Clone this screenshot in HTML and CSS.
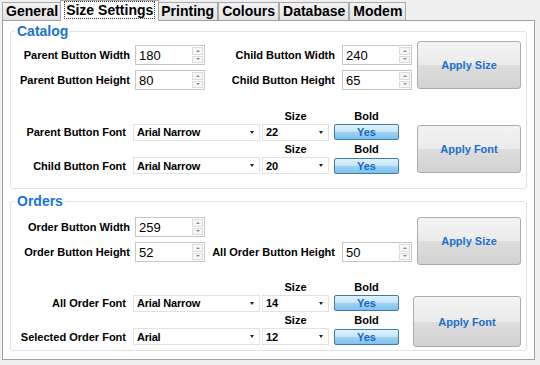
FILE: index.html
```html
<!DOCTYPE html>
<html lang="en">

<head>
    <meta charset="UTF-8">
    <meta name="viewport" content="width=device-width, initial-scale=1.0">
    <title>Size Settings</title>
    <link rel="stylesheet" href="styles.css">
</head>

<body>
    <div class="window">
        <!-- tab headers -->
        <div class="tabs">
            <div class="tab">General</div>
            <div class="tab active"><span class="focus">Size Settings</span></div>
            <div class="tab">Printing</div>
            <div class="tab">Colours</div>
            <div class="tab">Database</div>
            <div class="tab">Modem</div>
        </div>

        <div class="panel">
            <!-- Catalog -->
            <fieldset class="group">
                <legend>Catalog</legend>
                <div class="size-grid">
                    <label class="lbl">Parent Button Width</label>
                    <div class="spin"><span class="val">180</span><span class="arrows"><i class="up"></i><i class="down"></i></span></div>
                    <label class="lbl second">Child Button Width</label>
                    <div class="spin"><span class="val">240</span><span class="arrows"><i class="up"></i><i class="down"></i></span></div>
                    <button class="apply">Apply Size</button>
                    <label class="lbl">Parent Button Height</label>
                    <div class="spin"><span class="val">80</span><span class="arrows"><i class="up"></i><i class="down"></i></span></div>
                    <label class="lbl second">Child Button Height</label>
                    <div class="spin"><span class="val">65</span><span class="arrows"><i class="up"></i><i class="down"></i></span></div>
                </div>

                <div class="font-grid">
                    <span class="blank"></span>
                    <span class="head size">Size</span>
                    <span class="head bold">Bold</span>
                    <button class="apply">Apply Font</button>
                    <label class="lbl">Parent Button Font</label>
                    <div class="combo name">Arial Narrow</div>
                    <div class="combo size">22</div>
                    <button class="yes">Yes</button>
                    <span class="blank"></span>
                    <span class="head size">Size</span>
                    <span class="head bold">Bold</span>
                    <label class="lbl">Child Button Font</label>
                    <div class="combo name">Arial Narrow</div>
                    <div class="combo size">20</div>
                    <button class="yes">Yes</button>
                </div>
            </fieldset>

            <!-- Orders -->
            <fieldset class="group orders">
                <legend>Orders</legend>
                <div class="size-grid">
                    <label class="lbl">Order Button Width</label>
                    <div class="spin"><span class="val">259</span><span class="arrows"><i class="up"></i><i class="down"></i></span></div>
                    <span class="blank"></span>
                    <button class="apply">Apply Size</button>
                    <label class="lbl">Order Button Height</label>
                    <div class="spin"><span class="val">52</span><span class="arrows"><i class="up"></i><i class="down"></i></span></div>
                    <label class="lbl second">All Order Button Height</label>
                    <div class="spin"><span class="val">50</span><span class="arrows"><i class="up"></i><i class="down"></i></span></div>
                </div>

                <div class="font-grid">
                    <span class="blank"></span>
                    <span class="head size">Size</span>
                    <span class="head bold">Bold</span>
                    <button class="apply wide">Apply Font</button>
                    <label class="lbl">All Order Font</label>
                    <div class="combo name">Arial Narrow</div>
                    <div class="combo size">14</div>
                    <button class="yes">Yes</button>
                    <span class="blank"></span>
                    <span class="head size">Size</span>
                    <span class="head bold">Bold</span>
                    <label class="lbl">Selected Order Font</label>
                    <div class="combo name">Arial</div>
                    <div class="combo size">12</div>
                    <button class="yes">Yes</button>
                </div>
            </fieldset>
        </div>
    </div>
</body>

</html>
```

FILE: styles.css
```css
* {
    box-sizing: border-box;
}

body {
    margin: 0;
    background: #f0f0f0;
    font-family: "Liberation Sans", Arial, sans-serif;
    color: #000;
}

button {
    font-family: inherit;
    padding: 0;
    cursor: pointer;
}

.window {
    width: 540px;
    height: 365px;
}

/* tab strip */
.tabs {
    display: flex;
    align-items: flex-end;
    height: 20px;
    padding-left: 2px;
}

.tab {
    height: 18px;
    line-height: 17px;
    padding: 0 3px;
    border: 1px solid #a9a9a9;
    border-bottom: 0;
    background: linear-gradient(#f3f3f3, #e3e3e3);
    font-size: 14px;
    font-weight: bold;
    white-space: nowrap;
}

.tab.active {
    position: relative;
    z-index: 1;
    height: 21px;
    margin: 0 -2px -1px;
    padding: 1px 4px 0;
    line-height: 17px;
    background: #fff;
}

.tab.active .focus {
    display: inline-block;
    padding: 0 1px;
    line-height: 16px;
    outline: 1px dotted #333;
}

.panel {
    margin-left: 2px;
    width: 533px;
    height: 340px;
    padding-top: 1px;
    border: 1px solid #a0a0a0;
    background: #fff;
}

/* group boxes */
.group {
    margin: 1px 7px 0;
    padding: 2px 0 14px;
    min-width: 0;
    border: 1px solid #dde3e8;
    border-radius: 3px;
}

.group legend {
    margin-left: 4px;
    padding: 0 2px;
    font-size: 14px;
    line-height: 16px;
    font-weight: bold;
    color: #1a73d2;
}

.group.orders {
    margin-top: 4px;
    padding-top: 8px;
    padding-bottom: 5px;
}

.lbl {
    font-size: 11px;
    font-weight: bold;
    line-height: 20px;
    text-align: right;
    white-space: nowrap;
}

.blank {
    grid-column: span 2;
}

/* size rows */
.size-grid {
    display: grid;
    grid-template-columns: 124px 70px 137px 70px 109px;
    grid-template-rows: 24px 25px;
}

.orders .size-grid {
    grid-template-rows: 20px 25px;
}

.size-grid .lbl,
.size-grid .spin {
    align-self: end;
    height: 20px;
}

.size-grid .lbl {
    padding-right: 5px;
}

.size-grid .lbl.second {
    padding-right: 7px;
}

.size-grid .apply {
    grid-column: 5;
    grid-row: 1 / span 2;
    align-self: start;
    margin-left: 5px;
}

.spin {
    display: flex;
    align-items: center;
    padding-left: 3px;
    border: 1px solid #c6c6c6;
    font-size: 13px;
}

.spin .val {
    flex: 1;
}

.spin .arrows {
    display: flex;
    flex-direction: column;
    gap: 1px;
    width: 11px;
    height: 18px;
    margin-right: 1px;
    padding: 1px 0;
}

.spin .arrows i {
    flex: 1;
    display: flex;
    align-items: center;
    justify-content: center;
    border: 1px solid #dcdcdc;
    background: #f6f6f6;
}

.spin .arrows i::after {
    content: "";
    border-left: 2px solid transparent;
    border-right: 2px solid transparent;
}

.spin .arrows .up::after {
    border-bottom: 2px solid #7b8da3;
}

.spin .arrows .down::after {
    border-top: 2px solid #7b8da3;
}

/* font rows */
.font-grid {
    display: grid;
    grid-template-columns: 122px 129px 72px 83px 104px;
    grid-template-rows: 14px 18px 16px 17px;
    margin-top: 19px;
}

.orders .font-grid {
    margin-top: 18px;
}

.font-grid .lbl {
    grid-column: 1;
    align-self: center;
    padding-right: 7px;
}

.head {
    font-size: 11px;
    font-weight: bold;
    line-height: 14px;
    text-align: center;
    align-self: center;
}

.head.size {
    width: 67px;
}

.head.bold {
    width: 65px;
}

.combo {
    display: flex;
    align-items: center;
    justify-content: space-between;
    align-self: center;
    height: 17px;
    padding-left: 3px;
    border: 1px solid #e2e2e2;
    font-size: 11px;
    font-weight: bold;
    letter-spacing: -0.2px;
}

.combo::after {
    content: "";
    margin-right: 5px;
    border-top: 3px solid #222;
    border-left: 2px solid transparent;
    border-right: 2px solid transparent;
}

.combo.name {
    width: 127px;
}

.combo.size {
    width: 67px;
}

.yes {
    align-self: center;
    width: 65px;
    height: 16px;
    border: 1px solid #3c7cae;
    border-radius: 2px;
    background: linear-gradient(#dff1fc 0%, #c4e5f9 48%, #9fd2f2 52%, #80c1ea 100%);
    color: #1764c3;
    font-size: 11px;
    font-weight: bold;
    line-height: 14px;
}

.font-grid .apply {
    grid-column: 5;
    grid-row: 2 / span 3;
    align-self: start;
    margin-top: 2px;
}

.font-grid .apply.wide {
    width: 108px;
    height: 51px;
    margin-left: -4px;
}

.apply {
    width: 104px;
    height: 48px;
    border: 1px solid #acacac;
    border-radius: 3px;
    background: linear-gradient(#f3f3f3 0%, #ebebeb 50%, #dddddd 51%, #d2d2d2 100%);
    color: #1f6ecb;
    font-size: 11px;
    font-weight: bold;
}
```
